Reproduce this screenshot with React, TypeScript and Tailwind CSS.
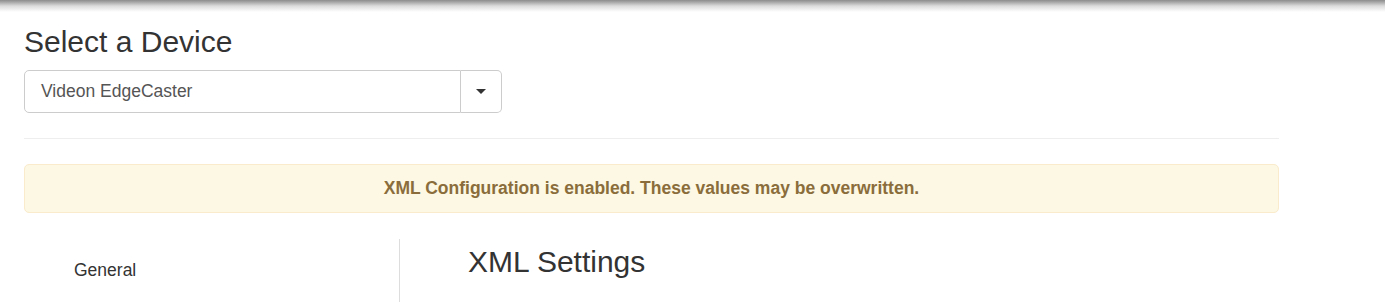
export default function App() {
  return (
    <div className="h-[302px] bg-white font-['Liberation_Sans',Arial,sans-serif] text-[#333] overflow-hidden">
      {/* navbar shadow */}
      <div className="h-[12px] bg-linear-to-b from-[#8c8c8c] via-[#dcdcdc] to-white" />

      <div className="ml-[24px] w-[1255px]">
        <h3 className="mt-[13px] text-[30px] leading-[33px]">Select a Device</h3>

        {/* device picker */}
        <div className="mt-[12px] flex h-[43px] w-[478px]">
          <div className="flex flex-1 items-center rounded-l-[5px] border border-[#ccc] pl-[16px] text-[17.5px] text-[#555]">
            Videon EdgeCaster
          </div>
          <button className="flex w-[41px] items-center justify-center rounded-r-[5px] border border-l-0 border-[#ccc] bg-white">
            <span className="h-0 w-0 border-x-[5px] border-t-[5px] border-x-transparent border-t-[#333]" />
          </button>
        </div>

        <hr className="mt-[25px] border-t border-[#eee]" />

        {/* alert */}
        <div className="mt-[25px] flex h-[49px] items-center justify-center rounded-[5px] border border-[#faebcc] bg-[#fcf8e3] text-[17.5px] font-bold text-[#8a6d3b]">
          XML Configuration is enabled. These values may be overwritten.
        </div>

        <div className="mt-[26px] flex h-[63px]">
          <div className="w-[376px] border-r border-[#ddd] pl-[50px] pt-[19px]">
            <div className="text-[17.5px] leading-[25px] text-[#333]">General</div>
          </div>
          <div className="pl-[68px] pt-[6px]">
            <h3 className="text-[30px] leading-[33px]">XML Settings</h3>
          </div>
        </div>
      </div>
    </div>
  )
}
